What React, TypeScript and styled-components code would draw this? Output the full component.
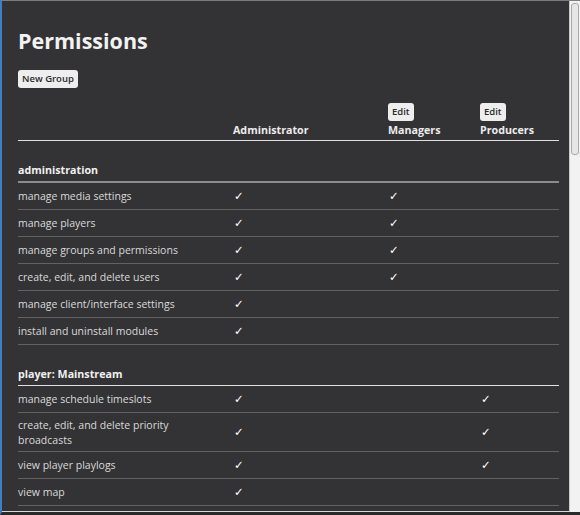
import React from "react";
import styled, { createGlobalStyle } from "styled-components";

const Global = createGlobalStyle`
  html, body { margin: 0; padding: 0; background: #2b2b2b; }
  * { box-sizing: border-box; }
`;

const Frame = styled.div`
  width: 580px;
  height: 515px;
  display: flex;
  border-top: 1px solid #7c7c7c;
  border-left: 2px solid #3f7dc8;
  border-bottom: 3px solid #2a2a2a;
  overflow: hidden;
`;

const Main = styled.main`
  flex: 1;
  background: #333234;
  padding: 25px 0 0 16px;
  border-bottom: 1px solid #d8d8d8;
  overflow: hidden;
  font-family: "Open Sans", "Noto Sans", sans-serif;
  color: #dcdcdc;
`;

const Scrollbar = styled.div`
  width: 11px;
  background: #f2f2f2;
  border-left: 1px solid #c8c8c8;
  padding: 2px 1px 0 1px;
`;

const Thumb = styled.div`
  height: 152px;
  background: #e6e6e6;
  border: 1px solid #a9a9a9;
  border-radius: 3px;
`;

const Title = styled.h1`
  margin: 0;
  font-size: 21.5px;
  line-height: 30px;
  font-weight: 700;
  color: #f2f2f2;
`;

const Button = styled.button<{ $top?: number; $bottom?: number }>`
  display: block;
  font-family: "Open Sans", "Noto Sans", sans-serif;
  font-size: 9.5px;
  font-weight: 600;
  line-height: 14px;
  color: #2a2a2a;
  background: #eeeeee;
  border: none;
  border-radius: 3px;
  padding: 2px 4px;
  margin: ${(p) => `${p.$top ?? 0}px 0 ${p.$bottom ?? 0}px 0`};
  cursor: pointer;
`;

const Table = styled.table`
  margin-top: 15px;
  width: 541px;
  border-collapse: collapse;
  table-layout: fixed;
  font-size: 10.5px;
  line-height: 15px;
`;

const HeadCell = styled.th`
  text-align: left;
  vertical-align: bottom;
  font-weight: 700;
  font-size: 10.7px;
  color: #ececec;
  padding: 0 0 2px 0;
  border-bottom: 1px solid #dedede;
`;

const SectionCell = styled.th<{ $line: string; $weight: number }>`
  text-align: left;
  font-weight: 700;
  font-size: 10.7px;
  color: #f0f0f0;
  padding: 22px 0 3px 0;
  border-bottom: ${(p) => `${p.$weight}px solid ${p.$line}`};
`;

const Cell = styled.td<{ $label?: boolean }>`
  height: 27px;
  padding: 5px ${(p) => (p.$label ? "22px" : "0")} 3px 0;
  vertical-align: middle;
  border-bottom: 1px solid #626262;
  color: #dadada;
`;

const Check = styled.span`
  font-family: "DejaVu Sans", sans-serif;
  font-size: 11.5px;
  color: #ffffff;
  padding-left: 1px;
`;

type Section = {
  name: string;
  line: string;
  weight: number;
  rows: { label: string; perms: boolean[] }[];
};

const sections: Section[] = [
  {
    name: "administration",
    line: "#8c8c8c",
    weight: 2,
    rows: [
      { label: "manage media settings", perms: [true, true, false] },
      { label: "manage players", perms: [true, true, false] },
      { label: "manage groups and permissions", perms: [true, true, false] },
      { label: "create, edit, and delete users", perms: [true, true, false] },
      { label: "manage client/interface settings", perms: [true, false, false] },
      { label: "install and uninstall modules", perms: [true, false, false] },
    ],
  },
  {
    name: "player: Mainstream",
    line: "#e2e2e2",
    weight: 1,
    rows: [
      { label: "manage schedule timeslots", perms: [true, false, true] },
      { label: "create, edit, and delete priority broadcasts", perms: [true, false, true] },
      { label: "view player playlogs", perms: [true, false, true] },
      { label: "view map", perms: [true, false, false] },
    ],
  },
];

export default function App() {
  return (
    <>
      <Global />
      <Frame>
        <Main>
          <Title>Permissions</Title>
          <Button $top={14}>New Group</Button>
          <Table>
            <colgroup>
              <col style={{ width: 215 }} />
              <col style={{ width: 155 }} />
              <col style={{ width: 92 }} />
              <col style={{ width: 79 }} />
            </colgroup>
            <thead>
              <tr>
                <HeadCell />
                <HeadCell>Administrator</HeadCell>
                <HeadCell>
                  <Button $bottom={2}>Edit</Button>
                  Managers
                </HeadCell>
                <HeadCell>
                  <Button $bottom={2}>Edit</Button>
                  Producers
                </HeadCell>
              </tr>
            </thead>
            {sections.map((s) => (
              <tbody key={s.name}>
                <tr>
                  <SectionCell colSpan={4} $line={s.line} $weight={s.weight}>
                    {s.name}
                  </SectionCell>
                </tr>
                {s.rows.map((r) => (
                  <tr key={r.label}>
                    <Cell $label>{r.label}</Cell>
                    {r.perms.map((p, i) => (
                      <Cell key={i}>{p ? <Check>✓</Check> : null}</Cell>
                    ))}
                  </tr>
                ))}
              </tbody>
            ))}
          </Table>
        </Main>
        <Scrollbar>
          <Thumb />
        </Scrollbar>
      </Frame>
    </>
  );
}
